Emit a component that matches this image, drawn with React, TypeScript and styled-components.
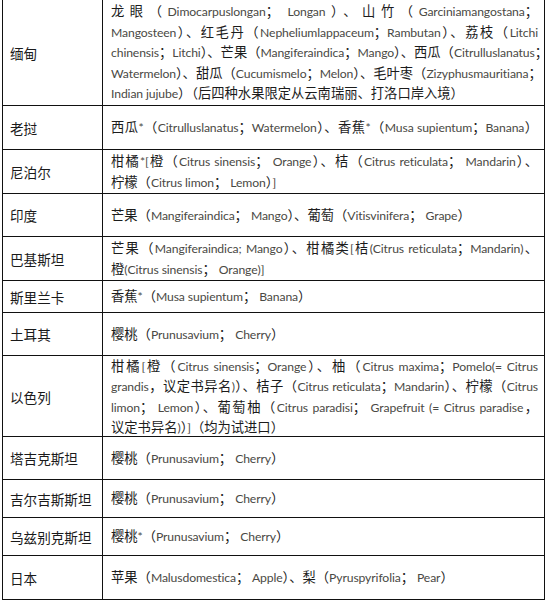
import React from 'react';
import styled, { createGlobalStyle } from 'styled-components';

const GlobalStyle = createGlobalStyle`
    html, body {
        margin: 0;
        padding: 0;
        background: #ffffff;
    }
    body {
        font-family: "Noto Sans CJK SC", "Noto Sans", sans-serif;
        color: #1c1c1c;
    }
`;

const Table = styled.div`
    margin-left: 2px;
    width: 543px;
    box-sizing: border-box;
    border-left: 1px solid #111;
    border-right: 1px solid #111;
    display: flex;
    flex-direction: column;
`;

const Row = styled.div<{ $h: number }>`
    display: grid;
    grid-template-columns: 100px 1fr;
    height: ${({ $h }) => $h}px;
    box-sizing: border-box;
    border-bottom: 1px solid #111;
`;

const NameCell = styled.div`
    display: flex;
    align-items: center;
    padding-left: 7px;
    border-right: 1px solid #111;
    font-size: 13.6px;
    white-space: nowrap;
    color: #1a1a1a;
`;

const ContentCell = styled.div`
    display: flex;
    flex-direction: column;
    justify-content: center;
    padding: 0 6px 0 8px;
    font-size: 13.3px;
    line-height: 19.4px;
    min-width: 0;
`;

const Line = styled.div<{ $fill?: boolean }>`
    white-space: nowrap;
    text-align: ${({ $fill }) => ($fill ? 'justify' : 'left')};
    text-align-last: ${({ $fill }) => ($fill ? 'justify' : 'left')};
`;

const Latin = styled.span`
    font-family: "Lato", "Liberation Sans", sans-serif;
    font-size: 12.2px;
    letter-spacing: -0.12px;
    color: #4a4944;
`;

// split a line into CJK runs and Latin runs so the Latin names get their own face
const CJK = /([\u3000-\u303f\u4e00-\u9fff\uff00-\uffef]+)/;

const Text = ({ children }: { children: string }) => (
    <>
        {children.split(CJK).filter(Boolean).map((part, i) =>
            CJK.test(part) ? <span key={i}>{part}</span> : <Latin key={i}>{part}</Latin>
        )}
    </>
);

type Entry = { name: string; h: number; lines: string[]; fill: number };

// fill = how many leading lines run to the right edge (justified)
const rows: Entry[] = [
    {
        name: '缅甸',
        h: 106,
        fill: 4,
        lines: [
            '龙眼（Dimocarpuslongan； Longan）、山竹（Garciniamangostana；',
            'Mangosteen）、红毛丹（Nepheliumlappaceum；Rambutan）、荔枝（Litchi',
            'chinensis；Litchi）、芒果（Mangiferaindica；Mango）、西瓜（Citrulluslanatus；',
            'Watermelon）、甜瓜（Cucumismelo；Melon）、毛叶枣（Zizyphusmauritiana；',
            'Indian jujube）（后四种水果限定从云南瑞丽、打洛口岸入境）',
        ],
    },
    {
        name: '老挝',
        h: 44,
        fill: 1,
        lines: ['西瓜*（Citrulluslanatus；Watermelon）、香蕉*（Musa supientum；Banana）'],
    },
    {
        name: '尼泊尔',
        h: 44,
        fill: 1,
        lines: [
            '柑橘*[橙（Citrus sinensis； Orange）、桔（Citrus reticulata； Mandarin）、',
            '柠檬（Citrus limon； Lemon）]',
        ],
    },
    {
        name: '印度',
        h: 43,
        fill: 0,
        lines: ['芒果（Mangiferaindica； Mango）、葡萄（Vitisvinifera； Grape）'],
    },
    {
        name: '巴基斯坦',
        h: 44,
        fill: 1,
        lines: [
            '芒果（Mangiferaindica; Mango）、柑橘类[桔(Citrus reticulata；Mandarin)、',
            '橙(Citrus sinensis； Orange)]',
        ],
    },
    { name: '斯里兰卡', h: 32, fill: 0, lines: ['香蕉*（Musa supientum； Banana）'] },
    { name: '土耳其', h: 43, fill: 0, lines: ['樱桃（Prunusavium； Cherry）'] },
    {
        name: '以色列',
        h: 81,
        fill: 3,
        lines: [
            '柑橘[橙（Citrus sinensis；Orange）、柚（Citrus maxima；Pomelo(= Citrus',
            'grandis，议定书异名)）、桔子（Citrus reticulata；Mandarin）、柠檬（Citrus',
            'limon； Lemon）、葡萄柚（Citrus paradisi； Grapefruit (= Citrus paradise，',
            '议定书异名)）]（均为试进口）',
        ],
    },
    { name: '塔吉克斯坦', h: 43, fill: 0, lines: ['樱桃（Prunusavium； Cherry）'] },
    { name: '吉尔吉斯斯坦', h: 38, fill: 0, lines: ['樱桃（Prunusavium； Cherry）'] },
    { name: '乌兹别克斯坦', h: 38, fill: 0, lines: ['樱桃*（Prunusavium； Cherry）'] },
    {
        name: '日本',
        h: 44,
        fill: 0,
        lines: ['苹果（Malusdomestica； Apple）、梨（Pyruspyrifolia； Pear）'],
    },
];

export default function App() {
    return (
        <>
            <GlobalStyle />
            <Table>
                {rows.map((r) => (
                    <Row key={r.name} $h={r.h}>
                        <NameCell>{r.name}</NameCell>
                        <ContentCell>
                            {r.lines.map((l, i) => (
                                <Line key={i} $fill={i < r.fill}>
                                    <Text>{l}</Text>
                                </Line>
                            ))}
                        </ContentCell>
                    </Row>
                ))}
            </Table>
        </>
    );
}
